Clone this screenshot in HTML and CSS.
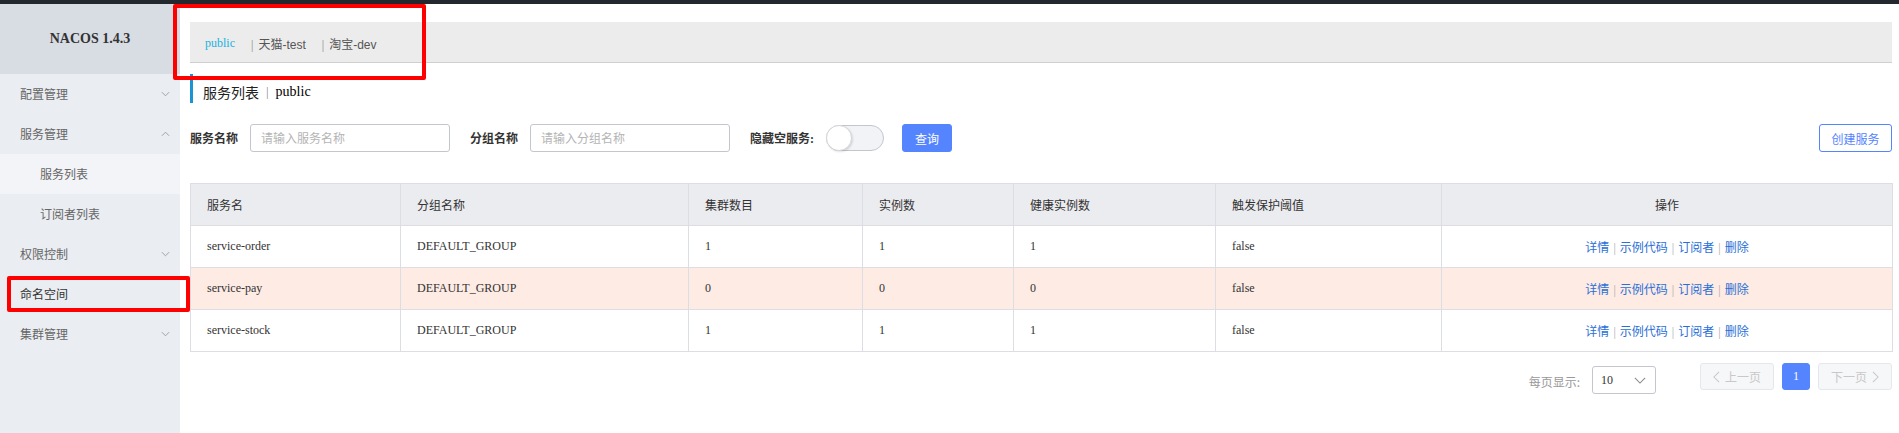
FILE: index.html
```html
<!DOCTYPE html>
<html lang="zh-CN">
<head>
<meta charset="utf-8">
<title>Nacos</title>
<link rel="stylesheet" href="styles.css">
</head>
<body>
<div class="topbar"></div>
<div class="layout">
  <aside class="sidebar">
    <div class="logo">NACOS 1.4.3</div>
    <ul class="menu">
      <li class="item"><span>配置管理</span><svg class="chev" viewBox="0 0 10 6"><polyline points="1,1 5,5 9,1"/></svg></li>
      <li class="item"><span>服务管理</span><svg class="chev" viewBox="0 0 10 6"><polyline points="1,5 5,1 9,5"/></svg></li>
      <li class="item sub selected"><span>服务列表</span></li>
      <li class="item sub"><span>订阅者列表</span></li>
      <li class="item"><span>权限控制</span><svg class="chev" viewBox="0 0 10 6"><polyline points="1,1 5,5 9,1"/></svg></li>
      <li class="item dark"><span>命名空间</span></li>
      <li class="item"><span>集群管理</span><svg class="chev" viewBox="0 0 10 6"><polyline points="1,1 5,5 9,1"/></svg></li>
    </ul>
  </aside>
  <main class="main">
    <div class="nsbar">
      <span class="ns active">public</span>
      <span class="ns"><span class="sep">|</span><span class="ns-name">天猫-test</span></span>
      <span class="ns"><span class="sep">|</span><span class="ns-name">淘宝-dev</span></span>
    </div>
    <div class="title"><span>服务列表</span><span class="title-sep">|</span><span class="title-ns">public</span></div>
    <div class="search">
      <label class="lbl">服务名称</label>
      <div class="input"><span class="ph">请输入服务名称</span></div>
      <label class="lbl">分组名称</label>
      <div class="input"><span class="ph">请输入分组名称</span></div>
      <label class="lbl">隐藏空服务:</label>
      <div class="switch"><div class="knob"></div></div>
      <button class="btn primary">查询</button>
      <div class="spacer"></div>
      <button class="btn outline">创建服务</button>
    </div>
    <table class="grid">
      <colgroup>
        <col class="c1"><col class="c2"><col class="c3"><col class="c4"><col class="c5"><col class="c6"><col class="c7">
      </colgroup>
      <thead>
        <tr><th>服务名</th><th>分组名称</th><th>集群数目</th><th>实例数</th><th>健康实例数</th><th>触发保护阈值</th><th class="center">操作</th></tr>
      </thead>
      <tbody>
        <tr><td>service-order</td><td>DEFAULT_GROUP</td><td>1</td><td>1</td><td>1</td><td>false</td><td class="center ops"><a>详情</a><span class="osep">|</span><a>示例代码</a><span class="osep">|</span><a>订阅者</a><span class="osep">|</span><a>删除</a></td></tr>
        <tr class="hl"><td>service-pay</td><td>DEFAULT_GROUP</td><td>0</td><td>0</td><td>0</td><td>false</td><td class="center ops"><a>详情</a><span class="osep">|</span><a>示例代码</a><span class="osep">|</span><a>订阅者</a><span class="osep">|</span><a>删除</a></td></tr>
        <tr><td>service-stock</td><td>DEFAULT_GROUP</td><td>1</td><td>1</td><td>1</td><td>false</td><td class="center ops"><a>详情</a><span class="osep">|</span><a>示例代码</a><span class="osep">|</span><a>订阅者</a><span class="osep">|</span><a>删除</a></td></tr>
      </tbody>
    </table>
    <div class="pager">
      <span class="pg-label">每页显示:</span>
      <div class="select"><span>10</span><svg class="sel-chev" viewBox="0 0 14 8"><polyline points="1,1 7,7 13,1"/></svg></div>
      <button class="pg disabled prev"><svg class="pg-arrow" viewBox="0 0 8 14"><polyline points="7,1 1,7 7,13"/></svg>上一页</button>
      <button class="pg current">1</button>
      <button class="pg disabled next">下一页<svg class="pg-arrow" viewBox="0 0 8 14"><polyline points="1,1 7,7 1,13"/></svg></button>
    </div>
  </main>
</div>
<div class="mark mark-ns"></div>
<div class="mark mark-menu"></div>
</body>
</html>
```

FILE: styles.css
```css
* { box-sizing: border-box; }
html, body { margin: 0; padding: 0; }
body {
  width: 1899px;
  height: 433px;
  overflow: hidden;
  background: #fff;
  font-family: "Liberation Serif", "Noto Sans CJK SC", serif;
  font-size: 12px;
  color: #333;
  position: relative;
}
.topbar { height: 4px; background: #23272e; }
.layout { display: flex; height: 429px; }

/* sidebar */
.sidebar { width: 180px; flex: none; background: #eaedf1; }
.logo {
  height: 70px;
  background: #d8dce3;
  display: flex;
  align-items: center;
  justify-content: center;
  font-weight: bold;
  font-size: 14px;
  color: #333;
}
.menu { list-style: none; margin: 0; padding: 0; }
.item {
  height: 40px;
  display: flex;
  align-items: center;
  justify-content: space-between;
  padding: 0 10px 0 20px;
  color: #666;
  font-size: 12px;
}
.item.sub { padding-left: 40px; }
.item.selected { background: #f3f4f7; }
.item.dark { color: #333; }
.chev { width: 9px; height: 6px; fill: none; stroke: #9a9a9a; stroke-width: 1; }

/* main */
.main { flex: 1; padding: 18px 7px 0 10px; min-width: 0; }
.nsbar {
  height: 41px;
  background: #ececec;
  border-bottom: 1px solid #cfcfcf;
  display: flex;
  align-items: center;
  padding: 3px 0 0 15px;
}
.ns { margin-right: 16px; color: #555; }
.ns.active { color: #20b2de; }
.sep { color: #888; margin-right: 5px; }
.ns-name { font-family: "Liberation Sans", "Noto Sans CJK SC", sans-serif; }

.title {
  margin-top: 11px;
  height: 29px;
  border-left: 3px solid #1c94d2;
  padding-left: 10px;
  display: flex;
  align-items: center;
  padding-top: 7px;
  font-size: 14px;
  color: #222;
}
.title-sep { color: #888; margin: 0 7px; font-size: 13px; }
.title-ns { color: #000; }

.search {
  margin-top: 21px;
  height: 28px;
  display: flex;
  align-items: center;
}
.lbl { font-weight: bold; color: #333; margin-right: 12px; font-size: 12px; }
.input {
  width: 200px;
  height: 28px;
  border: 1px solid #c4c6cf;
  border-radius: 3px;
  padding-left: 10px;
  display: flex;
  align-items: center;
  margin-right: 20px;
}
.ph { color: #b4b4b4; }
.switch {
  width: 58px;
  height: 26px;
  border: 1px solid #c4c6cf;
  border-radius: 13px;
  background: #f2f3f7;
  margin-right: 18px;
  position: relative;
}
.knob {
  width: 26px;
  height: 26px;
  margin: -1px 0 0 -1px;
  border-radius: 50%;
  background: #fff;
  border: 1px solid #d6d7dc;
  box-shadow: 1px 1px 2px rgba(0,0,0,0.12);
}
.btn {
  height: 28px;
  border-radius: 3px;
  font-family: "Noto Sans CJK SC", sans-serif;
  font-size: 12px;
  padding: 0;
  cursor: pointer;
}
.btn.primary { width: 50px; background: #5584ff; color: #fff; border: 1px solid #5584ff; }
.btn.outline { width: 73px; background: #fff; color: #5584ff; border: 1px solid #5584ff; }
.spacer { flex: 1; }

/* table */
.grid {
  margin-top: 31px;
  width: 100%;
  border-collapse: collapse;
  table-layout: fixed;
}
.c1 { width: 210px; } .c2 { width: 288px; } .c3 { width: 174px; } .c4 { width: 151px; }
.c5 { width: 202px; } .c6 { width: 226px; } .c7 { width: 451px; }
.grid th, .grid td {
  height: 42px;
  border: 1px solid #dcdee3;
  padding: 0 16px;
  text-align: left;
  font-weight: normal;
  color: #333;
  font-size: 12px;
}
.grid th { background: #ebecf0; }
.grid .center { text-align: center; }
.grid tr.hl td { background: #fdebe4; }
.ops a { color: #2a6fd6; }
.osep { color: #aaa; margin: 0 4px; }

/* pager */
.pager {
  display: flex;
  justify-content: flex-end;
  align-items: flex-start;
  margin-top: 11px;
}
.pg-label { color: #999; margin-right: 12px; margin-top: 10px; font-family: "Noto Sans CJK SC", sans-serif; }
.select {
  width: 64px;
  height: 28px;
  margin-top: 3px;
  border: 1px solid #c4c6cf;
  border-radius: 3px;
  display: flex;
  align-items: center;
  justify-content: space-between;
  padding: 0 9px 0 8px;
  margin-right: 44px;
  color: #333;
}
.sel-chev { width: 12px; height: 7px; fill: none; stroke: #888; stroke-width: 1.2; }
.pg {
  height: 27px;
  border-radius: 3px;
  font-family: "Noto Sans CJK SC", sans-serif;
  font-size: 12px;
  padding: 0;
  display: flex;
  align-items: center;
  justify-content: center;
  gap: 5px;
}
.pg.disabled { width: 74px; background: #f6f7f9; border: 1px solid #e6e7eb; color: #c8c8c8; }
.pg.current { width: 28px; margin: 0 8px; background: #5584ff; border: 1px solid #5584ff; color: #fff; font-family: "Liberation Serif", serif; }
.pg-arrow { width: 7px; height: 12px; fill: none; stroke: #c8c8c8; stroke-width: 1.2; }

/* annotation boxes */
.mark { position: absolute; border: 4px solid #ff0000; border-radius: 2px; }
.mark-ns { left: 173px; top: 4px; width: 253px; height: 76px; }
.mark-menu { left: 7px; top: 276px; width: 183px; height: 36px; }
```
